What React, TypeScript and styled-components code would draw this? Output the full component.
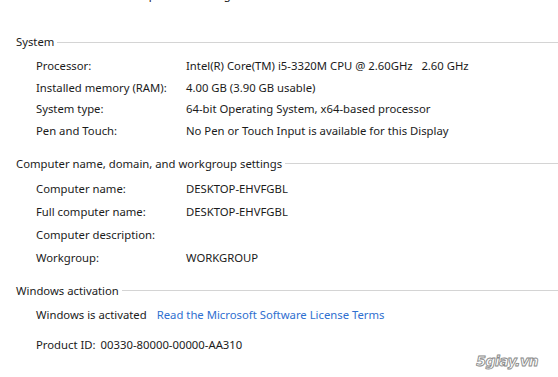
import styled, { createGlobalStyle } from "styled-components";

const GlobalStyle = createGlobalStyle`
  body {
    margin: 0;
    background: #ffffff;
    font-family: "Noto Sans", "Open Sans", sans-serif;
    font-size: 11.3px;
    color: #1b1b1b;
  }
`;

type Row = { label: string; value: string };

const systemRows: Row[] = [
  { label: "Processor:", value: "Intel(R) Core(TM) i5-3320M CPU @ 2.60GHz\u00a0\u00a0\u00a02.60 GHz" },
  { label: "Installed memory (RAM):", value: "4.00 GB (3.90 GB usable)" },
  { label: "System type:", value: "64-bit Operating System, x64-based processor" },
  { label: "Pen and Touch:", value: "No Pen or Touch Input is available for this Display" },
];

const computerRows: Row[] = [
  { label: "Computer name:", value: "DESKTOP-EHVFGBL" },
  { label: "Full computer name:", value: "DESKTOP-EHVFGBL" },
  { label: "Computer description:", value: "" },
  { label: "Workgroup:", value: "WORKGROUP" },
];

const App = () => {
  return (
    <Page>
      <GlobalStyle />
      <CutLine>© 2016 Microsoft Corporation. All rights reserved.</CutLine>

      <Section>
        <Header>
          <span>System</span>
          <Rule />
        </Header>
        {systemRows.map((row) => (
          <InfoRow key={row.label} $height={21.7}>
            <span>{row.label}</span>
            <span>{row.value}</span>
          </InfoRow>
        ))}
      </Section>

      <Section>
        <Header>
          <span>Computer name, domain, and workgroup settings</span>
          <Rule />
        </Header>
        {computerRows.map((row) => (
          <InfoRow key={row.label} $height={23}>
            <span>{row.label}</span>
            <span>{row.value}</span>
          </InfoRow>
        ))}
      </Section>

      <Section>
        <Header>
          <span>Windows activation</span>
          <Rule />
        </Header>
        <Line>
          <span>Windows is activated</span>
          <Link>Read the Microsoft Software License Terms</Link>
        </Line>
        <Line $top={8}>
          <span>Product ID:</span>
          <span>00330-80000-00000-AA310</span>
        </Line>
      </Section>

      <Watermark>5giay.vn</Watermark>
    </Page>
  );
};

export default App;

const Page = styled.div`
  position: relative;
  width: 558px;
  height: 377px;
  overflow: hidden;
  padding-left: 16px;
  box-sizing: border-box;
`;

const CutLine = styled.div`
  height: 22px;
  line-height: 22px;
  margin-top: -16px;
  padding-left: 20px;
  white-space: nowrap;
`;

const Section = styled.section`
  margin-top: 11.6px;

  &:first-of-type {
    margin-top: 25.7px;
  }
`;

const Header = styled.div`
  display: flex;
  align-items: center;
  gap: 3px;
  height: 20px;
  margin-bottom: 3.3px;
  white-space: nowrap;
`;

const Rule = styled.div`
  flex: 1;
  height: 1px;
  background: #d4d4d4;
  margin-top: 1px;
`;

const InfoRow = styled.div<{ $height: number }>`
  display: grid;
  grid-template-columns: 150px 1fr;
  height: ${(p) => p.$height}px;
  line-height: ${(p) => p.$height}px;
  padding-left: 20px;
  white-space: nowrap;
`;

const Line = styled.div<{ $top?: number }>`
  display: flex;
  gap: 5px;
  height: 22px;
  line-height: 22px;
  padding-left: 20px;
  margin-top: ${(p) => p.$top ?? 0}px;
  white-space: nowrap;

  & > span + a {
    margin-left: 5px;
  }
`;

const Link = styled.a`
  color: #2f6fd0;
  cursor: pointer;
`;

const Watermark = styled.div`
  position: absolute;
  right: 20px;
  bottom: 8px;
  font-family: "DejaVu Sans", sans-serif;
  font-size: 14px;
  font-weight: bold;
  font-style: italic;
  letter-spacing: -0.5px;
  color: #ffffff;
  -webkit-text-stroke: 0.8px #8a8a8a;
  text-shadow: 0 0 1px #9a9a9a;
`;
